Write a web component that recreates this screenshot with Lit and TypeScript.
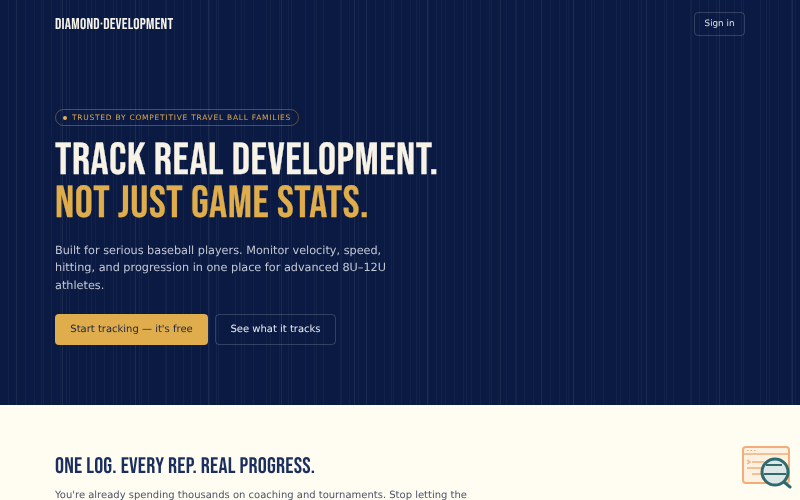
import { LitElement, html, css } from "lit";
import { customElement } from "lit/decorators.js";

@customElement("app-root")
export class AppRoot extends LitElement {
  static styles = css`
    :host { display: block; height: 500px; overflow: hidden; font-family: "DejaVu Sans", sans-serif; background: #fffcf2; text-rendering: geometricPrecision; filter: blur(.3px); }
    .hero {
      height: 405px; box-sizing: border-box; padding: 12px 55px 0; color: #fff;
      background-color: #0a1a42;
      background-image:
        repeating-linear-gradient(90deg, transparent 0 62px, rgba(255,255,255,.07) 62px 63px, transparent 63px 73px),
        repeating-linear-gradient(90deg, transparent 0 16px, rgba(255,255,255,.035) 16px 17px, transparent 17px 25px),
        repeating-linear-gradient(90deg, transparent 0 7.75px, rgba(255,255,255,.03) 7.75px 8.75px);
    }
    nav { display: flex; justify-content: space-between; align-items: center; height: 24px; }
    .logo { font-family: "Bebas Neue", sans-serif; font-size: 15.6px; letter-spacing: .25px; color: #f5f2e8; }
    .signin { width: 51px; height: 24px; box-sizing: border-box; border: 1px solid rgba(255,255,255,.17); border-radius: 4px; font-size: 8.75px; display: flex; align-items: center; justify-content: center; color: #dfe2e8; }
    .badge { display: inline-flex; align-items: center; gap: 5px; margin-top: 73px; height: 17px; box-sizing: border-box; padding: 0 7px; border: 1px solid rgba(232,176,75,.35); border-radius: 9px; font-size: 7.5px; letter-spacing: .75px; color: #d9a854; }
    .dot { width: 4px; height: 4px; border-radius: 50%; background: #e8b04b; }
    h1 { margin: 14px 0 0; font-family: "Bebas Neue", sans-serif; font-weight: 400; font-size: 45px; line-height: 42.75px; letter-spacing: .55px; color: #f7f3e6; -webkit-text-stroke: .25px currentColor; }
    h1 span { display: block; color: #e0ad4c; }
    .lead { margin: 16px 0 0; width: 350px; font-size: 11.25px; line-height: 17.5px; color: #c2c7d4; }
    .cta { display: flex; gap: 7px; margin-top: 20px; }
    .btn { height: 31px; box-sizing: border-box; border-radius: 4px; font-size: 10px; display: flex; align-items: center; justify-content: center; }
    .primary { width: 153px; background: #e0ad4c; color: #1a2547; }
    .secondary { width: 121px; border: 1px solid rgba(255,255,255,.17); color: #e8ebf2; }
    .sec2 { padding: 47px 55px 0; position: relative; }
    h2 { margin: 0; font-family: "Bebas Neue", sans-serif; font-weight: 400; font-size: 22.5px; line-height: 30px; letter-spacing: .22px; color: #1b2f5e; }
    .sec2 p { margin: 5px 0 0; width: 420px; font-size: 10px; line-height: 18px; color: #4b5568; }
    .illus { position: absolute; right: 8px; top: 40px; width: 50px; height: 46px; }
  `;
  render() {
    return html`
      <section class="hero">
        <nav><div class="logo">DIAMOND·DEVELOPMENT</div><div class="signin">Sign in</div></nav>
        <div class="badge"><span class="dot"></span>TRUSTED BY COMPETITIVE TRAVEL BALL FAMILIES</div>
        <h1>TRACK REAL DEVELOPMENT.<span>NOT JUST GAME STATS.</span></h1>
        <p class="lead">Built for serious baseball players. Monitor velocity, speed, hitting, and progression in one place for advanced 8U–12U athletes.</p>
        <div class="cta"><div class="btn primary">Start tracking — it's free</div><div class="btn secondary">See what it tracks</div></div>
      </section>
      <section class="sec2">
        <h2>ONE LOG. EVERY REP. REAL PROGRESS.</h2>
        <p>You're already spending thousands on coaching and tournaments. Stop letting the</p>
        <svg class="illus" viewBox="0 0 50 46" fill="none">
          <rect x="1" y="2" width="46" height="36" rx="3" fill="#fdf1e2" stroke="#f3ad78" stroke-width="2"/>
          <path d="M1 9h46" stroke="#f3ad78" stroke-width="1.5"/>
          <path d="M5 5.5h1.5M8.5 5.5h1.5M12 5.5h1.5" stroke="#f3ad78"/>
          <path d="M5 15l3 2-3 2M10 17h12M5 23h17M10 29h12" stroke="#f3ad78" stroke-width="1.5"/>
          <circle cx="33" cy="27" r="13" fill="#dde7e6" stroke="#2f6a6c" stroke-width="3"/>
          <path d="M24 20h16M22 29h22" stroke="#2f6a6c" stroke-width="2"/>
          <path d="M42 37l6 5" stroke="#2f6a6c" stroke-width="3" stroke-linecap="round"/>
        </svg>
      </section>
    `;
  }
}
